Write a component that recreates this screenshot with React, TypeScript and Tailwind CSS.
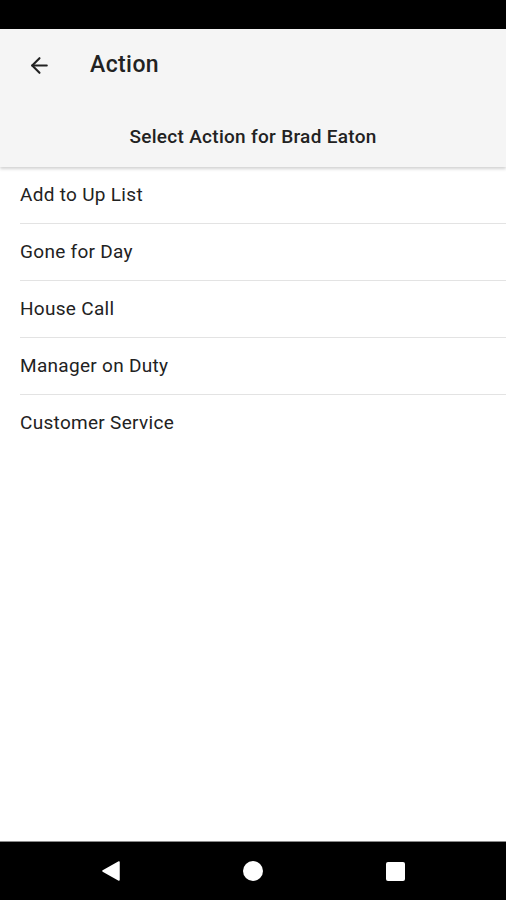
import { ArrowLeft } from "lucide-react";

const actions = ["Add to Up List", "Gone for Day", "House Call", "Manager on Duty", "Customer Service"];

export default function App() {
  return (
    <div className="flex flex-col w-[506px] h-[900px] bg-white font-['Roboto',sans-serif] text-[#212121]">
      <div className="h-[29px] bg-black shrink-0" />

      <div className="bg-[#f5f5f5] shrink-0 shadow-[0_2px_3px_rgba(0,0,0,0.18)] relative z-10">
        <div className="h-[72px] flex items-center pt-[1px]">
          <div className="w-[90px] pl-[27px] flex items-center">
            <ArrowLeft size={25} strokeWidth={2} className="text-[#222]" />
          </div>
          <div className="text-[23px] font-medium tracking-[0.4px] text-[#222]">Action</div>
        </div>
        <div className="pt-[24px] pb-[19px] text-center text-[19px] font-medium tracking-[0.3px] leading-[23px] text-[#222]">
          Select Action for Brad Eaton
        </div>
      </div>

      <div className="flex-1 flex flex-col">
        {actions.map((a, i) => (
          <div key={a} className="flex flex-col">
            <div className="h-[56px] flex items-center pl-[20px] pt-[1px] text-[19px] tracking-[0.3px] text-[#222]">{a}</div>
            {i < actions.length - 1 && <div className="ml-[20px] h-px bg-[#e3e3e3]" />}
          </div>
        ))}
      </div>

      <div className="h-[59px] shrink-0 bg-black border-t border-[#8a8a8a] flex items-center">
        <div className="w-full flex items-center justify-center">
          <div className="w-[142px] flex justify-center">
            <svg width="20" height="20" viewBox="0 0 20 20">
              <path d="M18 1 L2 10 L18 19 Z" fill="white" stroke="white" strokeWidth="1.5" strokeLinejoin="round" />
            </svg>
          </div>
          <div className="w-[142px] flex justify-center">
            <div className="w-[20px] h-[20px] rounded-full bg-white" />
          </div>
          <div className="w-[142px] flex justify-center">
            <div className="w-[19px] h-[19px] rounded-[2px] bg-white" />
          </div>
        </div>
      </div>
    </div>
  );
}
